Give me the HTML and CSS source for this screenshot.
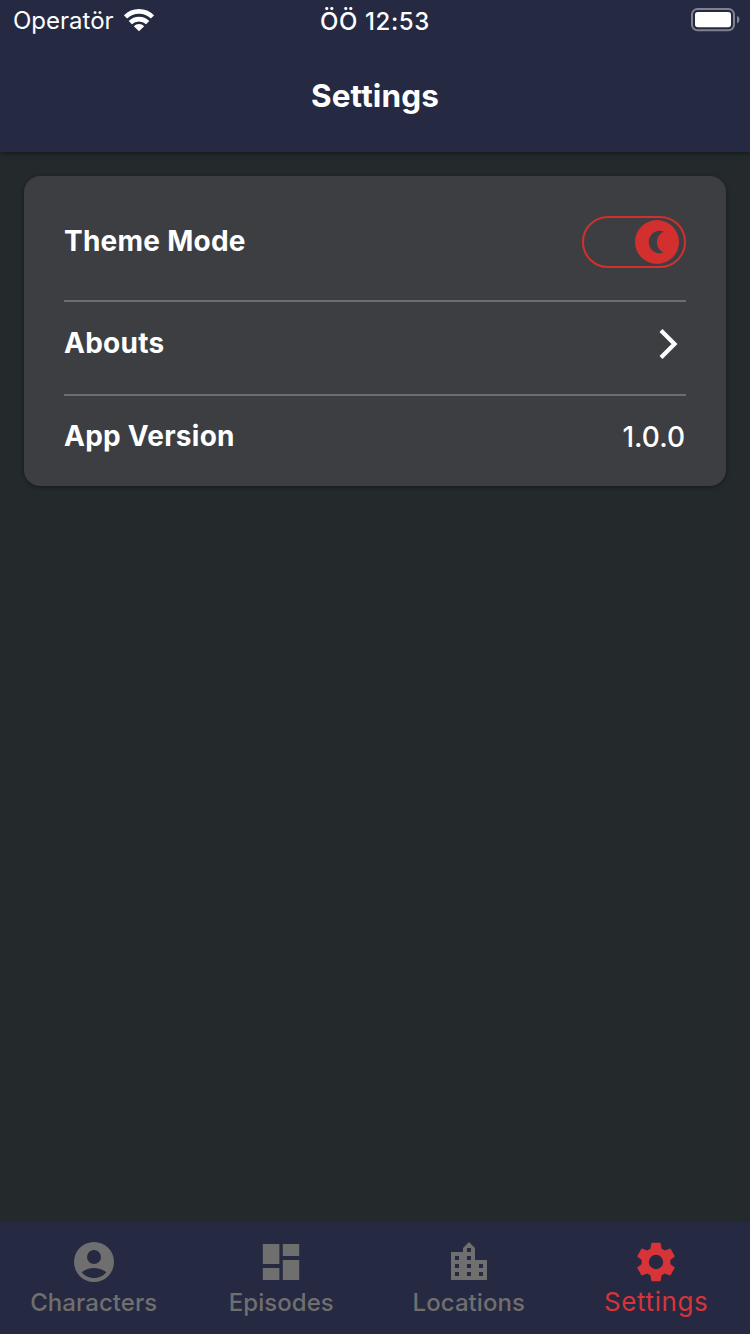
FILE: index.html
```html
<!DOCTYPE html>
<html lang="en">
<head>
<meta charset="utf-8">
<title>Settings</title>
<link rel="stylesheet" href="styles.css">
</head>
<body>
<div class="app">
  <header class="header">
    <div class="status">
      <div class="carrier"><span class="carrier-name">Operatör</span>
        <svg class="wifi" width="30" height="23" viewBox="0 0 30 23"><g fill="none" stroke="#fff" stroke-width="4.6"><path d="M1.5 8a19 19 0 0 1 27 0"/><path d="M6.3 13.7a12.3 12.3 0 0 1 17.4 0"/></g><path d="M9.8 17.2a7.4 7.4 0 0 1 10.4 0L15 22.3z" fill="#fff"/></svg>
      </div>
      <span class="clock">ÖÖ 12:53</span>
      <div class="battery">
        <svg width="49" height="24" viewBox="0 0 49 24"><rect x="1" y="1" width="42" height="21.2" rx="5.5" fill="none" stroke="#80828f" stroke-width="2"/><rect x="4" y="4" width="36" height="15.3" rx="2.8" fill="#fff"/><path d="M46 7.8q2.5 1.2 2.5 3.8T46 15.4z" fill="#80828f"/></svg>
      </div>
    </div>
    <h1 class="title">Settings</h1>
  </header>
  <main class="content">
    <section class="card">
      <div class="row row-theme"><span class="label theme-label">Theme Mode</span>
        <svg width="104" height="52" viewBox="0 0 104 52"><rect x="1" y="1" width="102" height="50" rx="25" fill="none" stroke="#d32f2f" stroke-width="2"/><circle cx="75" cy="26" r="22" fill="#d32f2f"/><path d="M81.8 15.4C75 12.7 66.8 17.3 66.8 26s8.2 13.3 15 10.6C72.7 32.4 72.7 19.6 81.8 15.4z" fill="#3c3e42"/></svg>
      </div>
      <div class="row row-about"><span class="label about-label">Abouts</span>
        <svg class="chevron" width="20" height="32" viewBox="0 0 20 32"><path d="M2 2.5 15.5 16 2 29.5" fill="none" stroke="#fff" stroke-width="4.2"/></svg>
      </div>
      <div class="row row-version"><span class="label version-label">App Version</span><span class="version">1.0.0</span></div>
    </section>
  </main>
  <nav class="tabs">
    <div class="tab"><svg class="icon" viewBox="0 0 24 24"><path fill-rule="evenodd" d="M12 2a10 10 0 1 0 0 20 10 10 0 0 0 0-20zm0 4a3.5 3.5 0 1 1 0 7 3.5 3.5 0 0 1 0-7zm0 14c-2.03 0-4.43-.82-6.14-2.88a9.95 9.95 0 0 1 12.28 0C16.43 19.18 14.03 20 12 20z"/></svg><span class="tab-label characters">Characters</span></div>
    <div class="tab"><svg class="icon" viewBox="0 0 24 24"><path d="M2.9 3h8.3v10H2.9zM2.9 15h8.3v6H2.9zM12.9 11h8.2v10h-8.2zM12.9 3h8.2v6h-8.2z"/></svg><span class="tab-label episodes">Episodes</span></div>
    <div class="tab"><svg class="icon" viewBox="0 0 24 24"><path fill-rule="evenodd" d="M15 11V5l-3-3-3 3v2H3v14h18V11h-6zm-8 8H5v-2h2v2zm0-4H5v-2h2v2zm0-4H5V9h2v2zm6 8h-2v-2h2v2zm0-4h-2v-2h2v2zm0-4h-2V9h2v2zm0-4h-2V5h2v2zm6 12h-2v-2h2v2zm0-4h-2v-2h2v2z"/></svg><span class="tab-label locations">Locations</span></div>
    <div class="tab active"><svg class="icon" viewBox="0 0 24 24"><path d="M19.14 12.94c.04-.3.06-.61.06-.94 0-.32-.02-.64-.07-.94l2.03-1.58c.18-.14.23-.41.12-.61l-1.92-3.32c-.12-.22-.37-.29-.59-.22l-2.39.96c-.5-.38-1.03-.7-1.62-.94l-.36-2.54c-.04-.24-.24-.41-.48-.41h-3.84c-.24 0-.43.17-.47.41l-.36 2.54c-.59.24-1.13.57-1.62.94l-2.39-.96c-.22-.08-.47 0-.59.22L2.74 8.87c-.12.21-.08.47.12.61l2.03 1.58c-.05.3-.09.63-.09.94s.02.64.07.94l-2.03 1.58c-.18.14-.23.41-.12.61l1.92 3.32c.12.22.37.29.59.22l2.39-.96c.5.38 1.03.7 1.62.94l.36 2.54c.05.24.24.41.48.41h3.84c.24 0 .44-.17.47-.41l.36-2.54c.59-.24 1.13-.56 1.62-.94l2.39.96c.22.08.47 0 .59-.22l1.92-3.32c.12-.22.07-.47-.12-.61l-2.01-1.58zM12 15.6A3.6 3.6 0 1 1 12 8.4a3.6 3.6 0 0 1 0 7.2z"/></svg><span class="tab-label settings">Settings</span></div>
  </nav>
</div>
</body>
</html>
```
FILE: styles.css
```css
* { box-sizing: border-box; }
body { margin: 0; background: #24292c; color: #fff; font-family: Inter, sans-serif; }
svg { display: block; flex: none; }
.app { width: 750px; height: 1334px; display: flex; flex-direction: column; overflow: hidden; }
.header { height: 152px; background: #262942; box-shadow: 0 1px 5px rgba(0,0,0,.5); }
.status { height: 40px; display: grid; grid-template-columns: 1fr auto 1fr; align-items: center; padding: 0 10px 0 13px; font-size: 24px; line-height: 40px; }
.carrier { display: flex; align-items: center; gap: 10px; }
.carrier-name { padding-top: 2px; line-height: 38px; letter-spacing: 0; }
.clock { padding-top: 3px; padding-right: 3px; line-height: 37px; font-weight: 500; letter-spacing: .6px; }
.battery { justify-self: end; }
.title { margin: 0; padding-top: 32px; text-align: center; font-size: 31.5px; font-weight: 700; line-height: 48px; letter-spacing: .15px; }
.content { flex: 1; padding: 24px; }
.card { height: 310px; padding: 0 40px; border-radius: 16px; background: #3c3e42; box-shadow: 0 1px 4px rgba(0,0,0,.4); }
.row { display: flex; align-items: center; justify-content: space-between; }
.row-theme { height: 126px; padding-top: 8px; border-bottom: 2px solid #6d6d6d; }
.row-about { height: 94px; padding-bottom: 8px; border-bottom: 2px solid #6d6d6d; }
.row-version { height: 82px; }
.label { padding-bottom: 1px; font-size: 28px; font-weight: 700; line-height: 35px; letter-spacing: .25px; }
.chevron { margin-right: 7px; }
.version { padding-right: 1px; font-size: 28px; font-weight: 500; line-height: 36px; }
.tabs { height: 112px; display: grid; grid-template-columns: repeat(4, 1fr); background: #262942; color: #6f6f6f; }
.tab { display: flex; flex-direction: column; align-items: center; padding-top: 16px; }
.icon { width: 48px; height: 48px; fill: currentColor; }
.tab-label { font-size: 24px; font-weight: 500; line-height: 34px; letter-spacing: .05px; }
.active { color: #d63438; }
.settings { font-size: 26px; font-weight: 400; line-height: 31px; letter-spacing: .6px; }
```
